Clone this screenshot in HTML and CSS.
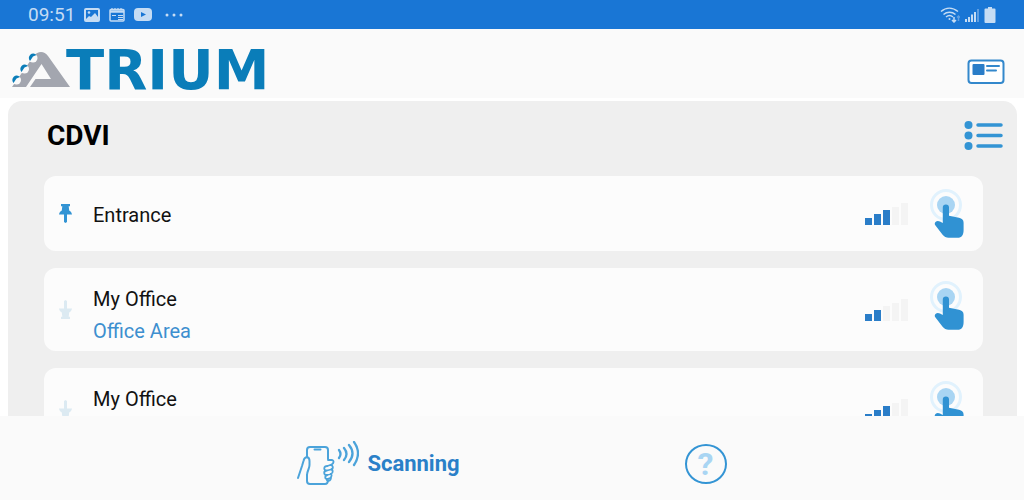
FILE: index.html
```html
<!DOCTYPE html>
<html lang="en">
<head>
<meta charset="utf-8">
<meta name="viewport" content="width=device-width, initial-scale=1">
<title>Atrium</title>
<link rel="stylesheet" href="styles.css">
</head>
<body>
<svg class="defs" aria-hidden="true">
  <symbol id="pin" viewBox="0 0 13 19">
    <path d="M2 0h9v2.300h-1.300l.5 4.200c1.500.8 2.500 2 2.800 4H8v7.500L6.500 19 5 18v-7.500H0c.3-2 1.300-3.200 2.800-4l.5-4.200H2z"/>
  </symbol>
  <symbol id="touch" viewBox="0 0 34 50">
    <circle cx="16" cy="16" r="14.500" fill="none" stroke="#e1f2fd" stroke-width="3"/>
    <circle cx="16" cy="16" r="9" fill="#a9d5f3"/>
    <path d="M12.800 18.500a3.100 3.100 0 0 1 6.200 0v8.300l10 2c3 .6 4.600 2.200 4.600 5V41c0 5-2 7.800-6 7.800h-9c-2.500 0-4.300-1-6-3L5.500 36.500c-1-1.300-1-2.600 0-3.600 1.200-1.300 3-1.200 4.500-.5l2.800 1.600z" fill="#3092d3"/>
  </symbol>
</svg>

<div class="status">
  <div class="status-group">
    <span class="clock">09:51</span>
    <svg width="16" height="14" viewBox="0 0 16 14"><rect x="1" y="1" width="14" height="12" rx="1" fill="none" stroke="currentColor" stroke-width="2"/><path d="M2 11l3-3 2 1 4-4 3 4v3H2z" fill="currentColor"/><circle cx="5" cy="4.500" r="1.300" fill="currentColor"/></svg>
    <svg width="16" height="14" viewBox="0 0 16 14"><rect x="1" y="1.500" width="14" height="11.500" rx="1" fill="none" stroke="currentColor" stroke-width="1.500"/><path d="M1 3.500h14" stroke="currentColor" stroke-width="2.500"/><path d="M3 7.500h4M9 7.500h5M9 9.500h5M9 11.500h5M3 0v2M6 0v2M9 0v2M12 0v2" stroke="currentColor" stroke-width="1.200"/></svg>
    <svg width="18" height="13" viewBox="0 0 18 13"><rect width="18" height="13" rx="4" fill="currentColor"/><path d="M7 4l5 2.500L7 9z" fill="#1976d5"/></svg>
    <svg class="more" width="18" height="4" viewBox="0 0 18 4" fill="currentColor"><circle cx="2" cy="2" r="1.500"/><circle cx="9" cy="2" r="1.500"/><circle cx="16" cy="2" r="1.500"/></svg>
  </div>
  <div class="status-group status-right">
    <svg width="20" height="16" viewBox="0 0 20 16" fill="none" stroke="currentColor" stroke-width="1.500"><path d="M1 4.500c5-4.500 11.500-4.500 17 0M3.500 7.500c3.500-3 8.500-3 12 0M6 10c2-1.600 5-1.600 7 0"/><circle cx="9.500" cy="12" r="1" fill="currentColor" stroke="none"/><path d="M14 10v5M12 13l2 2 2-2"/><path d="M18.500 14V9M17 10.500l1.500-1.500L20 10.500" opacity=".4"/></svg>
    <svg width="14" height="14" viewBox="0 0 14 14" fill="currentColor"><path d="M0 11h2v3H0zM3 9h2v5H3zM6 6.500h2V14H6zM9 4h2v10H9z"/><path d="M12 1h2v13h-2z" opacity=".4"/></svg>
    <svg width="12" height="16" viewBox="0 0 12 16" fill="currentColor"><path d="M4 0h4v1.500h2.500a1 1 0 0 1 1 1V15a1 1 0 0 1-1 1h-9a1 1 0 0 1-1-1V2.500a1 1 0 0 1 1-1H4z"/></svg>
  </div>
</div>

<header class="header">
  <div class="logo">
    <svg width="58" height="36" viewBox="0 0 58 36" aria-hidden="true">
      <path d="M22 3.500Q25 0 29 0t7 4L58 35H18l5.500-8H39L29.500 12 14 35H0z" fill="#a3a6af"/>
      <g fill="#fafafa"><circle cx="21" cy="6" r="4.500"/><circle cx="12.500" cy="17" r="4.500"/><circle cx="4.500" cy="28" r="4.500"/></g>
      <g fill="#0a7db9"><path d="M18 9a4.200 4.200 0 1 1 6.500-6L21 4.500zM9.500 20a4.200 4.200 0 1 1 6.500-6l-3.500 1.500zM1.500 31A4.200 4.200 0 1 1 8 25l-3.500 1.500z"/></g>
    </svg>
    <span class="wordmark">TRIUM</span>
  </div>
  <button class="icon-button" type="button" aria-label="Credential card">
    <svg width="38" height="26" viewBox="0 0 38 26"><rect x="1.500" y="1.500" width="35" height="22.500" rx="3" fill="#fff" stroke="#3388cc" stroke-width="2"/><rect x="5.500" y="5" width="12" height="11" rx="1" fill="#2a7dc8"/><path d="M20 7h12M20 11.500h9" stroke="#3388cc" stroke-width="2" stroke-linecap="round"/></svg>
  </button>
</header>

<main class="main">
  <section class="panel">
    <div class="panel-head">
      <h1 class="title">CDVI</h1>
      <button class="icon-button" type="button" aria-label="List">
        <svg width="40" height="30" viewBox="0 0 40 30" fill="#3394d4"><circle cx="4.500" cy="4" r="4"/><circle cx="4.500" cy="14.500" r="4"/><circle cx="4.500" cy="25" r="4"/><path d="M14 4h23M14 14.500h23M14 25h23" stroke="#3394d4" stroke-width="3.500" stroke-linecap="round"/></svg>
      </button>
    </div>
    <ul class="doors">
      <li class="door">
        <button class="pin pinned" type="button" aria-label="Unpin Entrance"><svg width="13" height="19"><use href="#pin"/></svg></button>
        <div class="names"><span>Entrance</span></div>
        <div class="signal"><i class="bar on"></i><i class="bar on"></i><i class="bar on"></i><i class="bar"></i><i class="bar"></i></div>
        <button class="touch" type="button" aria-label="Open Entrance"><svg width="34" height="50"><use href="#touch"/></svg></button>
      </li>
      <li class="door">
        <button class="pin" type="button" aria-label="Pin My Office"><svg width="13" height="19"><use href="#pin"/></svg></button>
        <div class="names with-area"><span>My Office</span><span class="area">Office Area</span></div>
        <div class="signal"><i class="bar on"></i><i class="bar on"></i><i class="bar"></i><i class="bar"></i><i class="bar"></i></div>
        <button class="touch" type="button" aria-label="Open My Office"><svg width="34" height="50"><use href="#touch"/></svg></button>
      </li>
      <li class="door">
        <button class="pin" type="button" aria-label="Pin My Office"><svg width="13" height="19"><use href="#pin"/></svg></button>
        <div class="names with-area"><span>My Office</span><span class="area">&nbsp;</span></div>
        <div class="signal"><i class="bar on"></i><i class="bar on"></i><i class="bar on"></i><i class="bar"></i><i class="bar"></i></div>
        <button class="touch" type="button" aria-label="Open My Office"><svg width="34" height="50"><use href="#touch"/></svg></button>
      </li>
    </ul>
  </section>
</main>

<footer class="footer">
  <button class="scan" type="button">
    <svg width="62" height="46" viewBox="0 0 62 46" fill="none" stroke="#4ba3da" stroke-width="2" stroke-linecap="round" stroke-linejoin="round">
      <path d="M10 16V9q0-3 3-3h15q3 0 3 3v9M31 39q0 4-3 4H13q-3 0-3-3v-6"/>
      <path d="M17.500 8.500h6M10 34c0-4 2.500-6 2.500-10v-4c0-5-5-5-6 0L5 25 1 37"/>
      <path d="M31 19h3.500c3 0 2.500 3.500 0 4.500l-4 1.500M30.500 25c-4 0-4.500 4.500-.5 4.500l4-1c3-1 2-5-1-4.300M30 29.500c-4 .5-3.500 4.500 0 4.500l4-1c2.500-1 2-4.500 0-4.500M30.500 34c-3 .5-3 4 0 4l2.500-1c2-1 2-4 .5-4M30 38c-1 3 4 2.500 4-1.500" stroke-width="1.800"/>
      <path d="M42 9q3 4 0 8M47 7q5 6 0 12M52 4q7 8.500 0 17M57 1q8 11 0 23" stroke-width="2.300"/>
    </svg>
    <span>Scanning</span>
  </button>
  <button class="help" type="button" aria-label="Help">?</button>
</footer>
</body>
</html>
```
FILE: styles.css
```css
* { box-sizing: border-box; }

body {
  margin: 0;
  height: 100vh;
  display: flex;
  flex-direction: column;
  overflow: hidden;
  background: #fff;
  color: #111;
  font: 20px/32px Roboto, sans-serif;
}

button {
  display: flex;
  align-items: center;
  padding: 0;
  border: 0;
  background: none;
  font: inherit;
  cursor: pointer;
}

svg { display: block; flex: none; }
.defs { position: absolute; width: 0; height: 0; }

.status {
  display: flex;
  justify-content: space-between;
  padding: 0 28px;
  background: #1976d5;
  color: #c5dcf4;
  line-height: 29px;
}
.status-group { display: flex; align-items: center; gap: 9px; }
.status-right { gap: 5px; }
.clock { font-size: 19px; }
.more { margin-left: 4px; }

.header {
  display: flex;
  align-items: center;
  justify-content: space-between;
  padding: 0 19px 0 12px;
  height: 69px;
  background: #fafafa;
}
.header .icon-button { margin-top: 16px; }
.logo { display: flex; align-items: center; margin-top: 13px; }
.wordmark {
  margin-left: -4px;
  color: #0a7db9;
  font: bold 56px/40px "DejaVu Sans", sans-serif;
}

.main {
  flex: 1;
  min-height: 0;
  overflow: hidden;
  padding: 3px 7px 0 8px;
}
.panel {
  padding: 16px 34px 18px 36px;
  border-radius: 14px;
  background: #efefef;
}
.panel-head {
  display: flex;
  justify-content: space-between;
  align-items: center;
  height: 38px;
  margin: 0 -21px 21px 3px;
}
.title { margin: 0; color: #000; font-size: 28px; font-weight: 700; }

.doors {
  display: flex;
  flex-direction: column;
  gap: 17px;
  margin: 0;
  padding: 0;
  list-style: none;
}
.door {
  display: flex;
  align-items: center;
  min-height: 75px;
  padding: 0 19px 0 15px;
  border-radius: 12px;
  background: #fcfcfc;
}
.names {
  display: flex;
  flex: 1;
  flex-direction: column;
  margin-left: 21px;
  padding-top: 3px;
}
.with-area { padding: 15px 0 4px; }
.area { color: #3d8fcf; }
.pin { fill: #dceaf2; transform: rotate(180deg); }
.pinned { fill: #3394d4; transform: none; }

.signal {
  display: flex;
  align-items: flex-end;
  gap: 2px;
  margin-right: 22px;
}
.touch { align-self: flex-start; margin-top: 13px; }
.bar { width: 7px; height: 22px; background: #f4f4f4; }
.bar.on { background: #2a7dc8; }
.bar:nth-child(1) { height: 7px; }
.bar:nth-child(2) { height: 11px; }
.bar:nth-child(3) { height: 15px; }
.bar:nth-child(4) { height: 18px; }

.footer {
  display: flex;
  align-items: center;
  justify-content: center;
  gap: 225px;
  height: 84px;
  padding-top: 12px;
  background: #fafafa;
}
.scan {
  gap: 8px;
  color: #2a80c8;
  font-size: 22px;
  font-weight: 700;
}
.help {
  justify-content: center;
  width: 42px;
  height: 40px;
  border: 2px solid #3394d4;
  border-radius: 50%;
  color: #a9d5f3;
  font-size: 32px;
  font-weight: 700;
}
```
